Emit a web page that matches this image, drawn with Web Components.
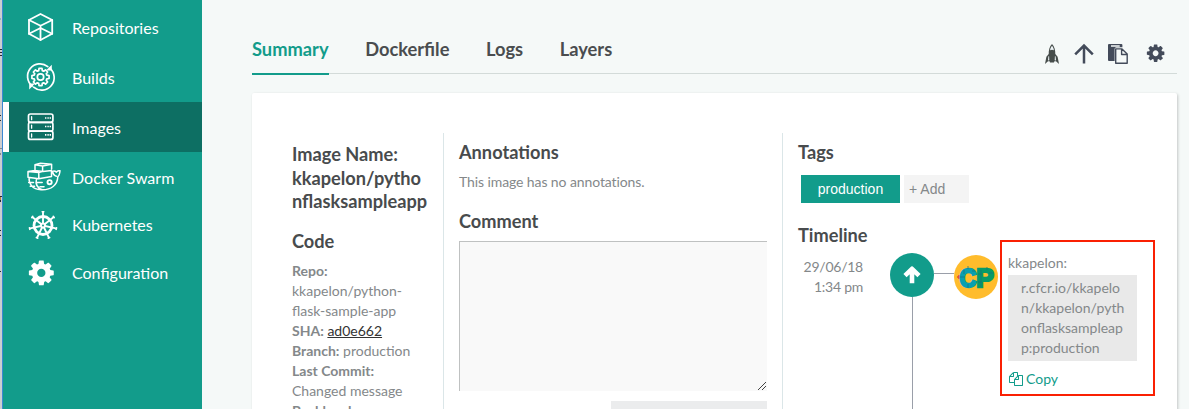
<!DOCTYPE html>
<html lang="en">
<head>
<meta charset="utf-8">
<title>Image summary</title>
<style>
html,body{margin:0;height:409px;overflow:hidden;background:#f5f9f8}
body{font:14px/20px Lato,"Liberation Sans",sans-serif;color:#84888a}
</style>
</head>
<body>
<app-shell></app-shell>
<script>
const COG='<path d="M1152 896q0-106-75-181t-181-75-181 75-75 181 75 181 181 75 181-75 75-181zm512-109v222q0 12-8 23t-20 13l-185 28q-19 54-39 91 35 50 107 138 10 12 10 25t-9 23q-27 37-99 108t-94 71q-12 0-26-9l-138-108q-44 23-91 38-16 136-29 186-7 28-36 28h-222q-14 0-24.5-8.5t-11.5-21.5l-28-184q-49-16-90-37l-141 107q-10 9-25 9-14 0-25-11-126-114-165-168-7-10-7-23 0-12 8-23 15-21 51-66.5t54-70.5q-27-50-41-99l-183-27q-13-2-21-12.5t-8-23.5v-222q0-12 8-23t19-13l186-28q14-46 39-92-40-57-107-138-10-12-10-24 0-10 9-23 26-36 98.5-107.5t94.5-71.5q13 0 26 10l138 107q44-23 91-38 16-136 29-186 7-28 36-28h222q14 0 24.5 8.5t11.5 21.5l28 184q49 16 90 37l142-107q9-9 24-9 13 0 25 10 129 119 165 170 7 8 7 22 0 12-8 23-15 21-51 66.5t-54 70.5q26 50 41 98l183 28q13 2 21 12.5t8 23.5z"/>';
const S='fill="none" stroke="currentColor" stroke-linecap="round" stroke-linejoin="round"';
const gearPath=(cx,cy,ro,ri,n)=>{let d='';for(let i=0;i<n;i++){const a=i*2*Math.PI/n-Math.PI/2;[[-.36,ri],[-.22,ro],[.22,ro],[.36,ri]].forEach(([o,r],j)=>{const t=a+o*6.2/n;d+=(i||j?'L':'M')+(cx+r*Math.cos(t)).toFixed(2)+' '+(cy+r*Math.sin(t)).toFixed(2)})}return d+'Z'};
const wheel=()=>{let s='';for(let i=0;i<7;i++){s+=`<g transform="rotate(${i*360/7} 16 15.5)"><path d="M16 15.5V2.5" stroke-width="1.9"/><path d="M15.2 1.8h1.6" stroke-width="1.6"/></g>`}return s};
const ICONS={
 cube:[34,30,`<g ${S} stroke-width="1.8"><path d="M13.5 2 25.2 8V21.8L13.5 28 2 21.8V8Z"/><path d="M2 8 13.5 13.8 25.2 8M13.5 13.8V28M2 21.8 13.5 16 25.2 21.8"/></g>`],
 builds:[34,30,`<g ${S} stroke-width="1.7"><path d="M5.2 24A12.4 12.4 0 0 1 20.8 4.6M22.8 6.2A12.4 12.4 0 0 1 6.6 25.2"/><path d="${gearPath(13.5,15,8.7,6.6,8)}" stroke-width="1.7"/><circle cx="13.5" cy="15" r="3.2"/></g><path fill="currentColor" d="M24.8 2.8V8.6H19ZM2.2 27.4V21.6H8Z"/>`],
 servers:[34,30,`<g ${S} stroke-width="1.7"><rect x="1.5" y="2" width="24.4" height="8.3" rx="2"/><rect x="1.5" y="10.3" width="24.4" height="8.8" rx="1.6"/><rect x="1.5" y="19.1" width="24.4" height="8.3" rx="2"/><path stroke-width="1.3" d="M4.6 4.7v3M4.6 13.2v3M4.6 22v3"/></g><path fill="currentColor" d="M18 5.2h1.4v1.6H18zM20.4 5.2h1.4v1.6h-1.4zM22.6 5.2H24v1.6h-1.4zM18 13.7h1.4v1.6H18zM20.4 13.7h1.4v1.6h-1.4zM22.6 13.7H24v1.6h-1.4zM18 22.1h1.4v1.6H18zM20.4 22.1h1.4v1.6h-1.4zM22.6 22.1H24v1.6h-1.4z"/>`],
 docker:[34,30,`<g ${S} stroke-width="1.5"><path d="M8 8.7V2.7L15.6 4V9.6M8 2.7 13.5 1.2 24.6 2.3V7M15.6 4 24.6 2.3M1 9.6 7.8 8.6 16 9.4 11.7 10.6ZM1 9.6V15.2L11.8 16.8V10.6M16 9.4 24.5 8.6V14.4L11.8 16.8M2 15.6C1.8 21 4.8 27.6 14 27.8 24.2 28.4 30.6 22.8 30.8 14.8 33 13 32.6 10.8 33 8.8 31.4 8.4 30 9 29.4 10.2 28.2 9 27 8.8 25.6 9.4 26 12.2 27.4 13.8 29.4 14.2M1.7 20.4H6.5M9.5 16.6C8 22.8 11.2 26.4 15.4 27.8M10 20.5H15.2M3.2 24.2H7.6M13 24.8H17"/><circle cx="22.6" cy="20.2" r="2.1" stroke-width="1.9"/></g>`],
 helm:[34,30,`<g ${S}>${wheel()}<circle cx="16" cy="15.5" r="9" stroke-width="2.8"/></g><circle cx="16" cy="15.5" r="3" fill="currentColor"/><circle cx="16" cy="15.5" r="1" fill="#129c8b"/>`],
 gear:[34,30,`<g fill="currentColor" transform="translate(-.2 .4) scale(.0162)">${COG}</g>`],
 rocket:[14,20,`<path fill="#464d4b" d="M7 0C4.5 2.6 3.6 6.2 3.7 10L1.4 12.8 0 20 3 17.2H4.6L5 18.4H9L9.4 17.2H11L14 20 12.6 12.8 10.3 10C10.4 6.2 9.5 2.6 7 0Z"/><path fill="#eef5f7" d="M7 1.8C6 3 5.4 4.4 5.1 6.2L7 5.8 8.9 6.2C8.6 4.4 8 3 7 1.8ZM3.4 12.2H4.1L4.3 16.2 3 16.4ZM10.6 12.2H9.9L9.7 16.2 11 16.4Z"/>`],
 up:[20,20,'<path d="M10 19.5V1.8M1.2 10.4 10 1.6 18.8 10.4" fill="none" stroke="currentColor" stroke-width="2.5"/>'],
 paste:[20,20,'<path fill="currentColor" fill-rule="evenodd" d="M1 0H13.4Q14.4 0 14.4 1V3.2H8.4Q6.6 3.2 6.6 5V17H1Q0 17 0 16V1Q0 0 1 0ZM3 1.2V2.8H11.7V1.2Z"/><path fill="#f5f9f8" stroke="currentColor" stroke-width="1.4" stroke-linejoin="round" d="M7.7 4.9H14L19.2 10.1V19.2H7.7ZM13.6 5V10.5H19.1"/>'],
 cog:[18,18,`<g fill="currentColor" transform="translate(-1.6 -1) scale(.0114)">${COG}</g>`],
 arrow:[18,18,'<path d="M9 17.2V5M2 9.6 9 2.8 16 9.6" fill="none" stroke="#fff" stroke-width="4.6" stroke-linejoin="round"/>'],
 files:[14,14,'<path fill="currentColor" transform="scale(.0078125)" d="M1696 384q40 0 68 28t28 68v1216q0 40-28 68t-68 28h-960q-40 0-68-28t-28-68v-288h-544q-40 0-68-28t-28-68v-672q0-40 20-88t48-76l408-408q28-28 76-48t88-20h416q40 0 68 28t28 68v328q68-40 128-40h416zm-544 213l-299 299h299v-299zm-640-384l-299 299h299v-299zm196 647l316-316v-416h-384v416q0 40-28 68t-68 28h-416v640h512v-256q0-40 20-88t48-76zm956 804v-1152h-384v416q0 40-28 68t-68 28h-416v640h896z"/>']
};
function define(name,render){
 customElements.define(name,class extends HTMLElement{
  constructor(){super();this.attachShadow({mode:'open'})}
  connectedCallback(){this.shadowRoot.innerHTML=render(this)}
 });
}
define('ui-icon',e=>{const [w,h,b]=ICONS[e.getAttribute('name')];return `<style>:host{display:block;flex:none;width:${w}px;height:${h}px}svg{display:block;overflow:visible}</style><svg width="${w}" height="${h}" viewBox="0 0 ${w} ${h}">${b}</svg>`});
define('nav-item',e=>`<style>
:host{display:flex;box-sizing:border-box;height:50px;align-items:center;padding-left:24px;color:#fff;font-size:16px;line-height:22px}
:host([short]){height:48px}
:host([active]){background:#0d6f63;border-left:6px solid #fff;padding-left:18px}
span{margin-left:11px;padding-top:2px}:host([short]) span{padding:0 0 2px}:host([short]) ui-icon{margin-bottom:2px}
</style><ui-icon name="${e.getAttribute('icon')}"></ui-icon><span><slot></slot></span>`);
define('page-edge',()=>`<style>:host{display:block;flex:none;width:3px;height:409px;background:#ccced0}svg{display:block}</style>
<svg width="3" height="409"><path fill="#3c87d2" d="M2 0h1v409H2z"/><path fill="#8ab8c4" d="M0 18h1v2H0z"/><path fill="#252a35" d="M0 49h2v1H0zM0 52h2v1H0zM0 55h2v1H0zM0 115h1v1H0zM0 120h1v1H0zM0 196h2v1H0zM0 200h1v2H0zM0 230h1v1H0zM0 235h1v1H0zM0 271h1v1H0z"/><path fill="#858b91" d="M0 148h2v1H0zM0 153h1v2H0z"/><path fill="#bd7e3d" d="M0 197h1v3H0z"/></svg>`);
define('side-nav',()=>`<style>:host{display:block;flex:none;width:199px;height:407px;padding-top:2px;background:#129c8b}</style>
<nav><nav-item icon="cube">Repositories</nav-item><nav-item icon="builds">Builds</nav-item><nav-item icon="servers" active>Images</nav-item><nav-item icon="docker">Docker Swarm</nav-item><nav-item icon="helm" short>Kubernetes</nav-item><nav-item icon="gear" short>Configuration</nav-item></nav>`);
define('tab-bar',()=>`<style>
:host{display:flex;box-sizing:border-box;width:925px;height:74px;border-bottom:1px solid #d3dbd9;padding-top:38px;font-size:18.3px;line-height:22px;font-weight:700;color:#4a4d4f}
.t{height:35px;margin-right:36.6px}.on{color:#129c8b;border-bottom:2px solid #129c8b}
.tools{display:flex;margin-left:auto;color:#434b5a;padding:6px 12px 0 0}.tools ui-icon+ui-icon{margin-left:15px}.tools ui-icon:nth-child(3){margin-left:14px}.tools ui-icon:nth-child(4){margin-left:19px}
</style><div class="t on">Summary</div><div class="t">Dockerfile</div><div class="t">Logs</div><div class="t">Layers</div><div class="tools"><ui-icon name="rocket"></ui-icon><ui-icon name="up"></ui-icon><ui-icon name="paste"></ui-icon><ui-icon name="cog"></ui-icon></div>`);
define('section-title',()=>`<style>:host{display:block;font-size:18.2px;line-height:23.5px;font-weight:700;color:#484b4d;white-space:nowrap}</style><slot></slot>`);
define('image-info',()=>`<style>:host{display:block;box-sizing:border-box;width:192px;padding:10px 0 0 40px;border-right:1px solid #dbe6e8;white-space:nowrap}
section-title+section-title{margin-top:16px}p{margin:8px 0 0}b{font-weight:700}a{color:#333;text-decoration:underline}</style>
<section-title>Image Name:<br>kkapelon/pytho<br>nflasksampleapp</section-title><section-title>Code</section-title>
<p><b>Repo:</b><br>kkapelon/python-<br>flask-sample-app<br><b>SHA:</b> <a>ad0e662</a><br><b>Branch:</b> production<br><b>Last Commit:</b><br>Changed message<br><b>Backbord</b></p>`);
define('image-notes',()=>`<style>:host{display:block;box-sizing:border-box;width:339px;padding:8px 15px 0;border-right:1px solid #dbe6e8}
p{margin:7px 0 18px;letter-spacing:-.1px}.box{display:flex;justify-content:flex-end;align-items:flex-end;box-sizing:border-box;height:150px;margin-top:8px;background:#f9f9f9;border:solid #bfc1c1;border-width:1px 0 0 1px}
.btn{width:156px;height:34px;margin:10px 0 0 auto;background:#ebeced}svg{display:block;margin:0 1px 1px 0}</style>
<section-title>Annotations</section-title><p>This image has no annotations.</p><section-title>Comment</section-title><div class="box"><svg width="8" height="8"><path d="M0 8 8 0M4 8 8 4" stroke="#444" stroke-width="1"/></svg></div><div class="btn"></div>`);
define('tag-list',()=>`<style>:host{display:flex;gap:4px;margin:10px 0 21px 3px;font:14px/28px "Liberation Sans",sans-serif}
span{box-sizing:border-box;height:28px}.on{width:99px;background:#129c8b;color:#fff;text-align:center}.add{width:65px;padding-left:5px;background:#f4f4f4;color:#84888a}</style><span class="on">production</span><span class="add">+ Add</span>`);
define('user-avatar',()=>`<style>:host{display:block;width:44px;height:44px}svg{display:block}text{font:bold 26px "Liberation Sans",sans-serif}</style>
<svg width="44" height="44"><circle cx="22" cy="22" r="22" fill="#ffbc2c"/><path d="M3 22h4M5 20v4" stroke="#e84c2b" stroke-width="1.6"/><text x="5.5" y="31.5" textLength="17" lengthAdjust="spacingAndGlyphs" fill="#0a9fb0" stroke="#0a9fb0" stroke-width="2.4">C</text><text x="22.3" y="31.5" textLength="17.6" lengthAdjust="spacingAndGlyphs" fill="#079b68" stroke="#079b68" stroke-width="2.4">P</text><path d="M10 15v4M14 11v3M14 29v4M6 22h5M18 16h3M27 15v17M33 12v3M24 19h4M24 27h4M35 18h4" stroke="#17717c" stroke-width=".7"/></svg>`);
define('pull-card',()=>`<style>:host{display:block;box-sizing:border-box;width:155px;height:156px;border:2px solid #fa2003;padding:11px 6px 0;line-height:20px}
.p{box-sizing:border-box;width:129px;height:86px;margin:2px 0 0;padding:3px 0 0 13px;background:#e9e9e9;white-space:nowrap}.c{display:flex;align-items:center;gap:3px;margin-top:8px;margin-left:1px;color:#129c8b}</style>
<div>kkapelon:</div><div class="p">r.cfcr.io/kkapelo<br>n/kkapelon/pyth<br>onflasksampleap<br>p:production</div><div class="c"><ui-icon name="files"></ui-icon>Copy</div>`);
define('time-line',()=>`<style>:host{display:flex;align-items:flex-start}
.d{width:65px;padding-top:10px;text-align:right;letter-spacing:-.25px}.m{width:44px;margin:6px 0 0 27px}.o{display:flex;width:44px;height:44px;align-items:center;justify-content:center;border-radius:50%;background:#129c8b}.v{width:1px;height:150px;margin-left:22px;background:#9a9fa9}.h{width:20px;height:1px;margin-top:26px;background:#9a9fa9}user-avatar{margin-top:8px}pull-card{margin:-7px 0 0 2px}</style>
<div class="d">29/06/18<br>1:34 pm</div><div class="m"><div class="o"><ui-icon name="arrow"></ui-icon></div><div class="v"></div></div><div class="h"></div><user-avatar></user-avatar><pull-card></pull-card>`);
define('image-activity',()=>`<style>:host{display:block;padding:8px 0 0 15px}</style><section-title>Tags</section-title><tag-list></tag-list><section-title>Timeline</section-title><time-line></time-line>`);
define('image-panel',()=>`<style>:host{display:flex;box-sizing:border-box;width:925px;height:340px;margin-top:19px;padding-top:40px;background:#fff;border-radius:2px;box-shadow:1px 1px 3px rgba(0,0,0,.2)}</style><image-info></image-info><image-notes></image-notes><image-activity></image-activity>`);
define('app-shell',()=>`<style>:host{display:flex;height:409px;overflow:hidden}main{margin-left:50px}</style><page-edge></page-edge><side-nav></side-nav><main><tab-bar></tab-bar><image-panel></image-panel></main>`);
</script>
</body>
</html>
